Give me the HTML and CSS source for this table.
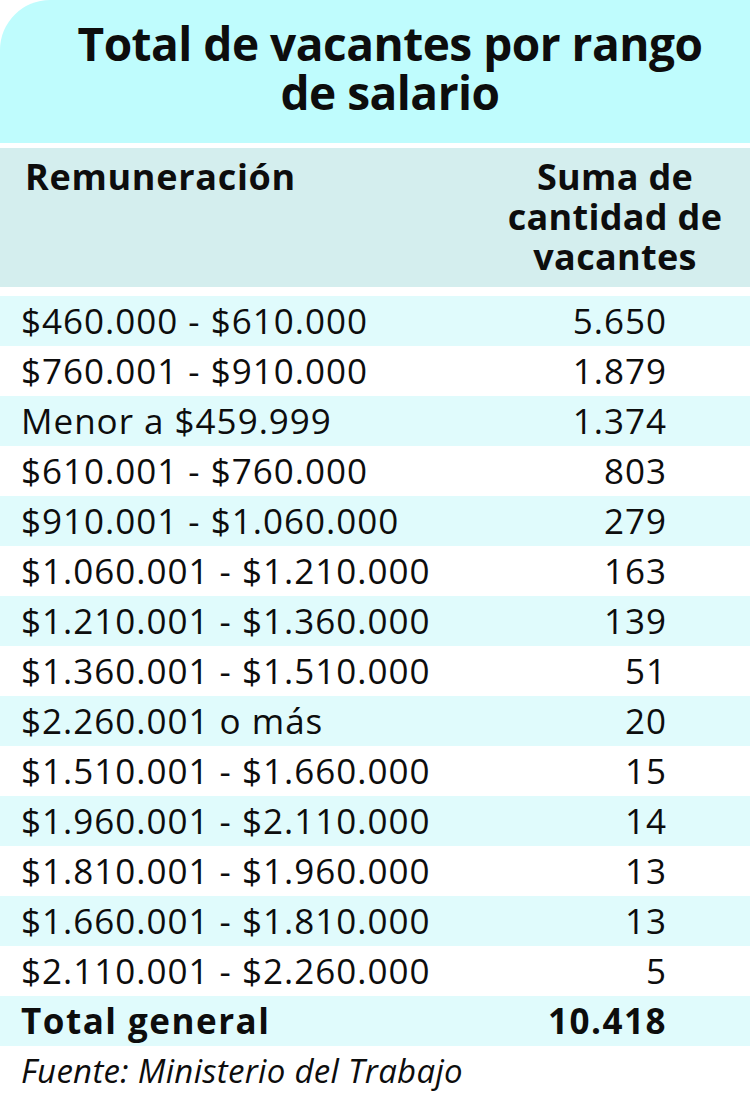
FILE: index.html
```html
<!DOCTYPE html>
<html lang="es">
<head>
<meta charset="utf-8">
<title>Total de vacantes por rango de salario</title>
<link rel="stylesheet" href="styles.css">
</head>
<body>
<div class="sheet">
  <div class="title">Total de vacantes por rango<br>de salario</div>
  <div class="head">
    <div class="head-col1">Remuneración</div>
    <div class="head-col2">Suma de<br>cantidad de<br>vacantes</div>
  </div>
  <div class="rows">
    <div class="row alt"><span>$460.000 - $610.000</span><span>5.650</span></div>
    <div class="row"><span>$760.001 - $910.000</span><span>1.879</span></div>
    <div class="row alt"><span>Menor a $459.999</span><span>1.374</span></div>
    <div class="row"><span>$610.001 - $760.000</span><span>803</span></div>
    <div class="row alt"><span>$910.001 - $1.060.000</span><span>279</span></div>
    <div class="row"><span>$1.060.001 - $1.210.000</span><span>163</span></div>
    <div class="row alt"><span>$1.210.001 - $1.360.000</span><span>139</span></div>
    <div class="row"><span>$1.360.001 - $1.510.000</span><span>51</span></div>
    <div class="row alt"><span>$2.260.001 o más</span><span>20</span></div>
    <div class="row"><span>$1.510.001 - $1.660.000</span><span>15</span></div>
    <div class="row alt"><span>$1.960.001 - $2.110.000</span><span>14</span></div>
    <div class="row"><span>$1.810.001 - $1.960.000</span><span>13</span></div>
    <div class="row alt"><span>$1.660.001 - $1.810.000</span><span>13</span></div>
    <div class="row"><span>$2.110.001 - $2.260.000</span><span>5</span></div>
    <div class="row alt total"><span>Total general</span><span>10.418</span></div>
  </div>
  <div class="source">Fuente: Ministerio del Trabajo</div>
</div>
</body>
</html>
```
FILE: styles.css
```css
html, body {
  margin: 0;
  padding: 0;
  background: #ffffff;
}
.sheet {
  width: 750px;
  font-family: "Open Sans", "Noto Sans", sans-serif;
  color: #0d0d0d;
}
.title {
  background: #bffcfd;
  border-top-left-radius: 50px;
  padding: 19px 10px 26px 40px;
  text-align: center;
  font-weight: 700;
  font-size: 46px;
  line-height: 49px;
  letter-spacing: -0.5px;
}
.head {
  margin-top: 5px;
  background: #d4eeee;
  display: flex;
  justify-content: space-between;
  padding: 9px 20px 10px 25px;
  font-weight: 700;
  font-size: 36px;
  line-height: 40px;
  letter-spacing: 0.7px;
}
.head-col2 {
  width: 230px;
  text-align: center;
  letter-spacing: 0.3px;
}
.rows {
  margin-top: 9px;
}
.row {
  display: flex;
  justify-content: space-between;
  height: 50px;
  padding: 0 83px 0 21px;
  font-size: 35px;
  line-height: 50px;
  letter-spacing: 1px;
}
.row.alt {
  background: #e0fbfc;
}
.row.total {
  font-weight: 700;
  letter-spacing: 1.5px;
}
.source {
  padding-left: 21px;
  font-style: italic;
  font-size: 33px;
  line-height: 50px;
  letter-spacing: 0.3px;
}
```
